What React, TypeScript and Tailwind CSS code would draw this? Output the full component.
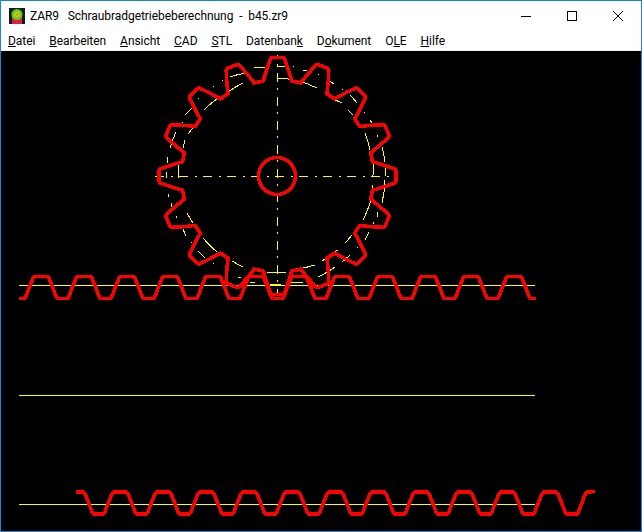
const cx = 277.5;
const cy = 176;

// tooth flank as [degrees from tooth centre, radius]
const TOOTH: Array<[number, number]> = [
  [-8.4, 96],
  [-7.5, 100],
  [-5.2, 109.5],
  [-3.4, 117.5],
  [-2.6, 118.7],
  [2.6, 118.7],
  [3.4, 117.5],
  [5.2, 109.5],
  [7.5, 100],
  [8.4, 96],
];

function gearPoints() {
  const pts: string[] = [];
  for (let i = 0; i < 16; i++) {
    for (const [deg, r] of TOOTH) {
      const a = ((i * 22.5 + deg) * Math.PI) / 180;
      pts.push(`${(cx + r * Math.sin(a)).toFixed(1)},${(cy - r * Math.cos(a)).toFixed(1)}`);
    }
  }
  return pts.join(" ");
}

function rackPoints(first: number, count: number, top: number, bottom: number) {
  const pts: string[] = [];
  for (let k = 0; k < count; k++) {
    const c = first + 43 * k;
    pts.push(
      `${c - 16.5},${bottom}`,
      `${c - 15.5},${bottom - 1}`,
      `${c - 8},${top + 1.5}`,
      `${c - 6},${top}`,
      `${c + 6},${top}`,
      `${c + 8},${top + 1.5}`,
      `${c + 15.5},${bottom - 1}`,
      `${c + 16.5},${bottom}`,
    );
  }
  return pts;
}

const rackTop = ["19,298.5", ...rackPoints(41, 12, 276.5, 298.5), "536,298.5"].join(" ");
const rackBottom = [
  "76,492",
  "83,492",
  "85,493.5",
  "92.5,513",
  "93.5,514",
  ...rackPoints(120, 11, 492, 514),
  "577,514",
  "578,513",
  "585.5,493.5",
  "588,492",
  "595,491.5",
].join(" ");

// visible pieces of the two dash-dot circles, clockwise, [x1, y1, x2, y2]
const OUTER = [
  [277, 67, 285, 67], [293, 67, 294, 67], [303, 70, 307, 71], [318, 74, 319, 75], [329, 81, 334, 84],
  [342, 89, 343, 90], [350, 95, 357, 103], [364, 112, 365, 113], [370, 120, 372, 123], [377, 135, 378, 137],
  [382, 147, 385, 162], [385, 167, 386, 176], [385, 180, 382, 203], [378, 212, 377, 217], [374, 222, 373, 224],
  [369, 232, 365, 240], [358, 247, 357, 248], [350, 255, 342, 262], [335, 267, 318, 277], [312, 280, 311, 280],
  [303, 282, 290, 283], [255, 283, 250, 282], [242, 277, 237, 277], [214, 264, 213, 263], [205, 258, 198, 251],
  [192, 243, 191, 242], [186, 236, 183, 229], [177, 218, 176, 216], [172, 207, 172, 203], [169, 197, 169, 194],
  [167, 178, 167, 172], [168, 163, 168, 157], [170, 148, 176, 132], [182, 123, 183, 122], [185, 115, 192, 108],
  [198, 99, 199, 98], [213, 87, 214, 86], [222, 81, 223, 80], [230, 77, 245, 73], [254, 68, 265, 68],
];
const INNER = [
  [277, 78, 317, 88], [335, 100, 342, 103], [348, 110, 353, 115], [365, 133, 370, 150], [373, 163, 373, 176],
  [373, 185, 370, 203], [370, 203, 363, 220], [352, 235, 345, 243], [338, 250, 333, 253], [325, 259, 322, 261],
  [315, 265, 303, 268], [286, 272, 267, 272], [243, 267, 232, 261], [217, 252, 203, 238], [193, 223, 187, 213],
  [179, 178, 179, 163], [183, 148, 185, 140], [188, 134, 193, 128], [204, 110, 218, 98], [228, 92, 243, 83],
];

function Gear() {
  return (
    <svg viewBox="1 51 640 480" width="640" height="480" className="block">
      <g stroke="#ffff00" strokeWidth="1" fill="none" shapeRendering="crispEdges">
        <line x1="155" y1="176.5" x2="398" y2="176.5" strokeDasharray="9 6.5 2 6.5" />
        <line x1="277.5" y1="55" x2="277.5" y2="296" strokeDasharray="9 6.5 2 6.5" strokeDashoffset="6.3" />
        <line x1="19" y1="285.5" x2="535" y2="285.5" />
        <line x1="19" y1="395.5" x2="535" y2="395.5" />
        <line x1="19" y1="504.5" x2="535" y2="504.5" />
        <line x1="270" y1="284.5" x2="281" y2="284.5" />
        {OUTER.map(([x1, y1, x2, y2], i) => (
          <path key={i} d={`M${x1} ${y1}A109 109 0 0 1 ${x2} ${y2}`} />
        ))}
        {INNER.map(([x1, y1, x2, y2], i) => (
          <path key={i} d={`M${x1} ${y1}A97 97 0 0 1 ${x2} ${y2}`} />
        ))}
      </g>
      <g stroke="#ff0000" strokeWidth="3.5" fill="none" shapeRendering="crispEdges" strokeLinejoin="round">
        <polygon points={gearPoints()} />
        <circle cx="277" cy="176" r="18.5" />
        <polyline points={rackTop} />
        <polyline points={rackBottom} />
      </g>
    </svg>
  );
}

function AppIcon() {
  return (
    <svg width="16" height="16" viewBox="0 0 16 16" className="block">
      <rect width="16" height="16" fill="#1a1a1a" />
      <rect x="3" y="9" width="10" height="7" fill="#d81f4a" />
      <circle cx="8" cy="6.5" r="5.5" fill="#58d018" />
      <circle cx="8" cy="6.5" r="3" fill="#c8c820" />
      <circle cx="8" cy="6.5" r="1.2" fill="#e89020" />
    </svg>
  );
}

const MENU: Array<[string, string, string]> = [
  ["", "D", "atei"],
  ["", "B", "earbeiten"],
  ["", "A", "nsicht"],
  ["", "C", "AD"],
  ["", "S", "TL"],
  ["Datenban", "k", ""],
  ["D", "o", "kument"],
  ["O", "L", "E"],
  ["", "H", "ilfe"],
];

export default function App() {
  return (
    <div className="w-[642px] h-[532px] flex flex-col border border-[#1883d7] bg-white text-black text-xs tracking-[-0.06px] font-['Roboto',sans-serif] overflow-hidden">
      <div className="h-[30px] flex items-center shrink-0">
        <div className="pl-2 pr-[5px]">
          <AppIcon />
        </div>
        <span className="flex-1 whitespace-pre">ZAR9   Schraubradgetriebeberechnung  -  b45.zr9</span>
        <div className="flex">
          <div className="w-[46px] h-[30px] flex items-center justify-center">
            <svg width="10" height="10" viewBox="0 0 10 10" stroke="#000" fill="none">
              <line x1="0" y1="5.5" x2="10" y2="5.5" />
            </svg>
          </div>
          <div className="w-[46px] h-[30px] flex items-center justify-center">
            <svg width="10" height="10" viewBox="0 0 10 10" stroke="#000" fill="none">
              <rect x="0.5" y="0.5" width="9" height="9" />
            </svg>
          </div>
          <div className="w-[46px] h-[30px] flex items-center justify-center">
            <svg width="10" height="10" viewBox="0 0 10 10" stroke="#000" fill="none">
              <path d="M0 0L10 10M10 0L0 10" />
            </svg>
          </div>
        </div>
      </div>
      <div className="h-[19px] flex items-center shrink-0">
        {MENU.map(([before, key, after], i) => (
          <span key={i} className="px-[7px] whitespace-pre">
            {before}
            <u>{key}</u>
            {after}
          </span>
        ))}
      </div>
      <div className="h-px bg-[#f0f0f0] shrink-0" />
      <div className="flex-1 bg-black">
        <Gear />
      </div>
    </div>
  );
}
